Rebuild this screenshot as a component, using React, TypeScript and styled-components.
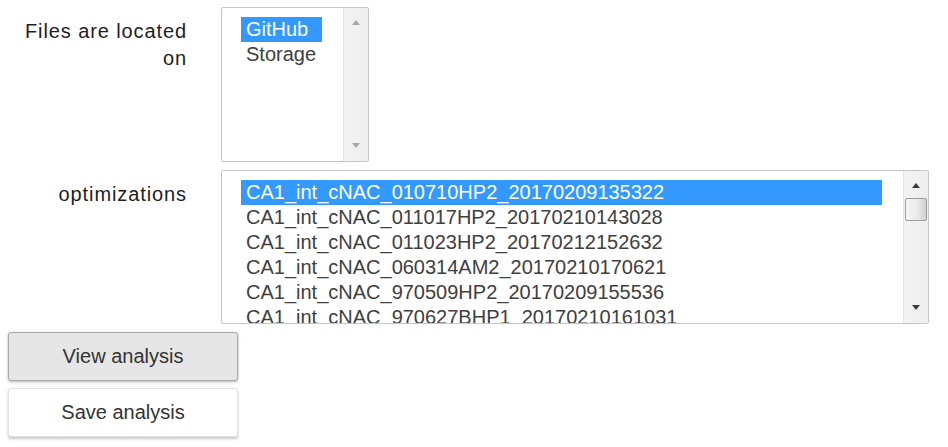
import React from 'react'
import styled, { createGlobalStyle } from 'styled-components'

type ListBoxProps = {
  width: number;
  height: number;
}
type OptionsProps = {
  rowWidth?: number;
}
type RowProps = {
  selected?: boolean;
}
type ArrowProps = {
  dim?: boolean;
  down?: boolean;
}
type ButtonProps = {
  active?: boolean;
}

const GlobalStyle = createGlobalStyle`
  html, body {
    margin: 0;
    padding: 0;
    background: #ffffff;
  }
  body {
    font-family: "Liberation Sans", Arial, sans-serif;
  }
`

const locations = ['GitHub', 'Storage']
const optimizations = [
  'CA1_int_cNAC_010710HP2_20170209135322',
  'CA1_int_cNAC_011017HP2_20170210143028',
  'CA1_int_cNAC_011023HP2_20170212152632',
  'CA1_int_cNAC_060314AM2_20170210170621',
  'CA1_int_cNAC_970509HP2_20170209155536',
  'CA1_int_cNAC_970627BHP1_20170210161031',
]

export default function App(): React.ReactElement {
  return (
    <Page>
      <GlobalStyle />
      <Form>
        <Label>Files are located on</Label>
        <ListBox width={148} height={155}>
          <Options>
            {locations.map((l, i) => (
              <Row key={l} selected={i === 0}>{l}</Row>
            ))}
          </Options>
          <Scrollbar>
            <Arrow dim />
            <Arrow dim down />
          </Scrollbar>
        </ListBox>

        <Label>optimizations</Label>
        <ListBox width={708} height={154}>
          <Options rowWidth={641}>
            {optimizations.map((o, i) => (
              <Row key={o} selected={i === 0}>{o}</Row>
            ))}
          </Options>
          <Scrollbar>
            <Arrow />
            <Thumb />
            <Arrow down />
          </Scrollbar>
        </ListBox>
      </Form>
      <Buttons>
        <Button active>View analysis</Button>
        <Button>Save analysis</Button>
      </Buttons>
    </Page>
  )
}

const Page = styled.div`
  display: flex;
  flex-direction: column;
  gap: 8px;
  padding: 7px 8px;
`
const Form = styled.div`
  display: grid;
  grid-template-columns: 180px auto;
  column-gap: 33px;
  row-gap: 8px;
  align-items: start;
`
const Label = styled.div`
  padding-top: 11px;
  padding-right: 1px;
  text-align: right;
  font-size: 20px;
  letter-spacing: 0.9px;
  line-height: 27px;
  color: #1e1e1e;
`
const ListBox = styled.div<ListBoxProps>`
  box-sizing: border-box;
  width: ${({ width }) => width}px;
  height: ${({ height }) => height}px;
  border: 1px solid #c6c6c6;
  border-radius: 2px;
  box-shadow: 0 0 1px rgba(0, 0, 0, 0.08);
  display: flex;
  overflow: hidden;
`
const Options = styled.div<OptionsProps>`
  flex: 1;
  padding: 9px 0 0 19px;
  overflow: hidden;
  display: grid;
  grid-auto-rows: 25px;
  justify-content: start;
  align-content: start;
  & > div {
    box-sizing: border-box;
    min-width: ${({ rowWidth }) => (rowWidth ? `${rowWidth}px` : 'auto')};
  }
`
const Row = styled.div<RowProps>`
  height: 25px;
  line-height: 24px;
  padding: 0 6px 0 5px;
  font-size: 20px;
  white-space: nowrap;
  color: ${({ selected }) => (selected ? '#ffffff' : '#404040')};
  background: ${({ selected }) => (selected ? '#3399ff' : 'transparent')};
`
const Scrollbar = styled.div`
  width: 25px;
  flex-shrink: 0;
  box-sizing: border-box;
  border-left: 1px solid #e4e4e4;
  background: linear-gradient(90deg, #f3f3f3, #eeeeee);
  display: flex;
  flex-direction: column;
  align-items: center;
  padding: 12px 0 13px;
`
const Arrow = styled.div<ArrowProps>`
  width: 0;
  height: 0;
  border-left: 4px solid transparent;
  border-right: 4px solid transparent;
  ${({ down, dim }) =>
    down
      ? `border-top: 5px solid ${dim ? '#a8a8a8' : '#3c3c3c'}; margin-top: auto;`
      : `border-bottom: 5px solid ${dim ? '#a8a8a8' : '#3c3c3c'};`}
`
const Thumb = styled.div`
  box-sizing: border-box;
  width: 22px;
  height: 23px;
  margin: 10px 1px 0 0;
  border: 1px solid #9c9c9c;
  border-radius: 2px;
  background: linear-gradient(90deg, #f6f6f6 0%, #e8e8e8 60%, #d2d2d2 100%);
`
const Buttons = styled.div`
  display: flex;
  flex-direction: column;
  gap: 7px;
`
const Button = styled.button<ButtonProps>`
  box-sizing: border-box;
  width: 230px;
  height: 49px;
  font-family: "Liberation Sans", Arial, sans-serif;
  font-size: 20px;
  color: #333333;
  border-radius: 3px;
  cursor: pointer;
  background: ${({ active }) => (active ? '#e6e6e6' : '#ffffff')};
  border: 1px solid ${({ active }) => (active ? '#a9a9a9' : '#e2e2e2')};
  box-shadow: ${({ active }) =>
    active ? '0 1px 3px rgba(0, 0, 0, 0.3)' : '0 2px 3px rgba(0, 0, 0, 0.22)'};
`
